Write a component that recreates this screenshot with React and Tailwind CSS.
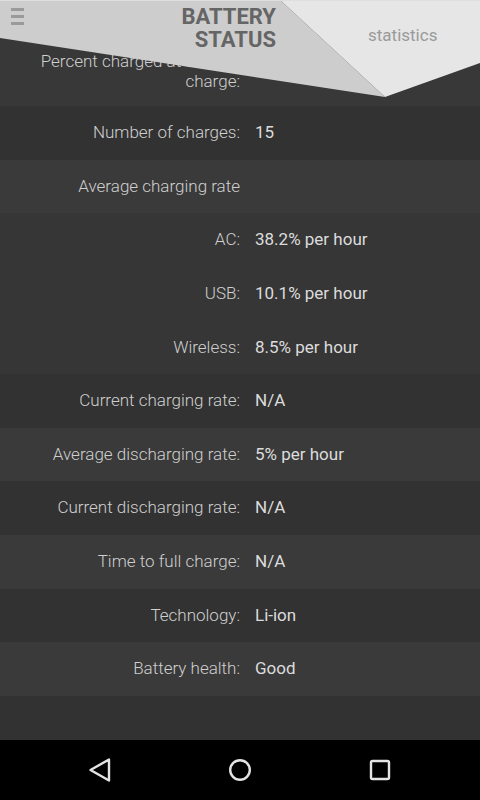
import React from "react";

const rows = [
  { label: "Number of charges:", value: "15", tone: "dark" },
  { label: "Average charging rate", value: "", tone: "light" },
  { label: "AC:", value: "38.2% per hour", tone: "mid" },
  { label: "USB:", value: "10.1% per hour", tone: "mid" },
  { label: "Wireless:", value: "8.5% per hour", tone: "mid" },
  { label: "Current charging rate:", value: "N/A", tone: "dark" },
  { label: "Average discharging rate:", value: "5% per hour", tone: "light" },
  { label: "Current discharging rate:", value: "N/A", tone: "dark" },
  { label: "Time to full charge:", value: "N/A", tone: "light" },
  { label: "Technology:", value: "Li-ion", tone: "dark" },
  { label: "Battery health:", value: "Good", tone: "light" },
];

const toneClass = {
  dark: "bg-[#323232]",
  light: "bg-[#3a3a3a]",
  mid: "bg-[#363636]",
};

const StatRow = ({ label, value, tone }) => (
  <div className={`h-[53.64px] flex items-center ${toneClass[tone]}`}>
    <div className="w-[240px] text-right text-[17px] font-light text-[#cfcfcf]">{label}</div>
    <div className="pl-[15px] text-[17px] text-[#dcdcdc]">{value}</div>
  </div>
);

export default function App() {
  return (
    <div className="relative w-[480px] h-[800px] flex flex-col overflow-hidden font-['Roboto','Liberation_Sans',sans-serif]">
      <div className="flex-1 bg-[#323232] overflow-hidden">
        {/* first row sits partly under the header */}
        <div className="h-[106px] flex items-end pb-[15px] bg-[#383838]">
          <div className="w-[240px] text-right text-[17px] leading-[20px] font-light text-[#cfcfcf] whitespace-nowrap">
            Percent charged at the last
            <br />
            charge:
          </div>
          <div className="pl-[15px] text-[17px] text-[#dcdcdc]"></div>
        </div>
        {rows.map((r) => (
          <StatRow key={r.label} {...r} />
        ))}
      </div>

      <nav className="h-[60px] bg-black flex items-center justify-center gap-[100px]">
        <button className="w-[40px] h-[40px] flex items-center justify-center">
          <svg width="24" height="26" viewBox="0 0 24 26">
            <path d="M2.5 13 L21 2.5 L21 23.5 Z" fill="none" stroke="#e4e4e4" strokeWidth="2.4" strokeLinejoin="round" />
          </svg>
        </button>
        <button className="w-[40px] h-[40px] flex items-center justify-center">
          <svg width="26" height="26" viewBox="0 0 26 26">
            <circle cx="13" cy="13" r="9.8" fill="none" stroke="#e4e4e4" strokeWidth="2.4" />
          </svg>
        </button>
        <button className="w-[40px] h-[40px] flex items-center justify-center">
          <svg width="24" height="24" viewBox="0 0 24 24">
            <rect x="3" y="3" width="18" height="18" rx="1.5" fill="none" stroke="#e4e4e4" strokeWidth="2.4" />
          </svg>
        </button>
      </nav>

      {/* header overlay */}
      <header className="absolute top-0 left-0 w-[480px] h-[100px]">
        <svg className="absolute inset-0" width="480" height="100" viewBox="0 0 480 100">
          <polygon points="0,0 280,0 385,97 0,38" fill="#cdcdcd" />
          <polygon points="280,0 480,0 480,63 385,97" fill="#e6e6e6" />
          <rect x="0" y="0" width="480" height="1" fill="#dedede" />
        </svg>
        <div className="absolute left-[11px] top-[8px] w-[13px] flex flex-col gap-[4px]">
          <span className="h-[3px] bg-[#9a9a9a]" />
          <span className="h-[3px] bg-[#9a9a9a]" />
          <span className="h-[3px] bg-[#9a9a9a]" />
        </div>
        <div className="absolute right-[204px] top-[5px] text-right text-[22px] leading-[23px] font-bold text-[#656565]">
          BATTERY
          <br />
          STATUS
        </div>
        <div className="absolute left-[368px] top-[23px] text-[17px] text-[#9a9a9a]">statistics</div>
      </header>
    </div>
  );
}
